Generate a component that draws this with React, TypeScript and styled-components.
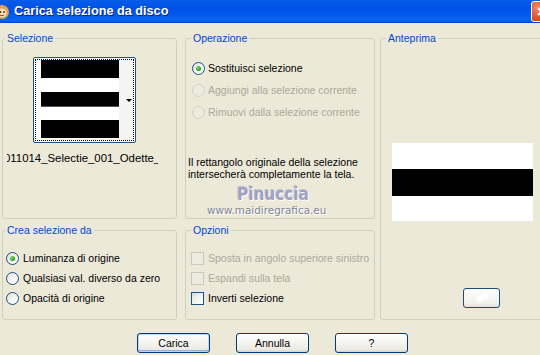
import React from "react";
import styled, { createGlobalStyle, css } from "styled-components";

const GlobalStyle = createGlobalStyle`
  html, body { margin: 0; padding: 0; overflow: hidden; background: #ECE9D8; }
  body { font-family: "Liberation Sans", Arial, sans-serif; font-size: 10.5px; color: #000; }
  * { box-sizing: border-box; }
`;

const Window = styled.div`
  width: 540px;
  height: 355px;
  display: flex;
  flex-direction: column;
  overflow: hidden;
  background: #ECE9D8;
`;

const TitleBar = styled.div`
  height: 23px;
  flex: none;
  display: flex;
  align-items: center;
  overflow: hidden;
  background: linear-gradient(
    to bottom,
    #0A5FE6 0%,
    #0658E8 10%,
    #0052E8 45%,
    #0260F5 80%,
    #0566FA 90%,
    #004BDC 96%,
    #0040D0 100%
  );
`;

const TitleIcon = styled.svg`
  flex: none;
  margin-left: -6px;
  margin-right: 4px;
`;

const TitleText = styled.span`
  flex: 1;
  color: #fff;
  font-family: "Liberation Sans", Arial, sans-serif;
  font-weight: bold;
  font-size: 12.7px;
  text-shadow: 1px 1px 0 #0A1F8A;
  margin-top: -1px;
`;

const CloseBtn = styled.div`
  flex: none;
  width: 21px;
  height: 21px;
  margin-right: -12px;
  border: 1px solid #fff;
  border-radius: 3px;
  background: radial-gradient(circle at 30% 30%, #F08A6A 0%, #E0502E 55%, #C23B1C 100%);
  display: flex;
  align-items: center;
  justify-content: center;
`;

const Body = styled.div`
  padding: 8px 0 0 2px;
  display: grid;
  grid-template-columns: 175px 8px 190px 5px 200px;
  grid-template-rows: 188px 97px;
  grid-template-areas:
    "sel . op . prev"
    "crea . opz . prev";
  row-gap: 4px;
`;

const Group = styled.fieldset<{ $area: string }>`
  grid-area: ${(p) => p.$area};
  margin: 0;
  padding: 0;
  min-width: 0;
  border: 1px solid #D0D0BF;
  border-radius: 3px;
  display: flex;
  flex-direction: column;
`;

const Legend = styled.legend<{ $indent: number }>`
  margin-left: ${(p) => p.$indent}px;
  padding: 0 2px;
  line-height: 14px;
  color: #0046D5;
  font-size: 10.5px;
`;

/* Selezione */
const SelContent = styled.div`
  padding: 12px 0 0 30px;
  display: flex;
  flex-direction: column;
`;

const Thumb = styled.div`
  width: 103px;
  height: 86px;
  border: 1px solid #1C5180;
  border-radius: 2px;
  background: #fff;
  padding: 1px;
`;

const FocusRect = styled.div`
  height: 100%;
  border: 1px dotted #000;
  display: flex;
  padding-left: 5px;
`;

const ArrowArea = styled.div`
  flex: 1;
  display: flex;
  align-items: center;
  justify-content: flex-end;
  padding-right: 1px;
  padding-top: 1px;
  background: #F4F4F4;
`;

const Arrow = styled.div`
  width: 0;
  height: 0;
  border-left: 3px solid transparent;
  border-right: 3px solid transparent;
  border-top: 3px solid #000;
`;

const FileName = styled.div`
  width: 151px;
  margin: 9px 0 0 -26px;
  line-height: 13px;
  font-size: 11.4px;
  white-space: nowrap;
  overflow: hidden;
`;

const FileText = styled.span`
  display: inline-block;
  margin-left: -3px;
`;

/* Options rows */
const RowList = styled.div<{ $top: number; $left: number }>`
  padding: ${(p) => p.$top}px 0 0 ${(p) => p.$left}px;
  display: flex;
  flex-direction: column;
`;

const Row = styled.div<{ $h: number; $disabled?: boolean; $gap?: number }>`
  height: ${(p) => p.$h}px;
  display: flex;
  align-items: center;
  gap: ${(p) => p.$gap ?? 3}px;
  color: ${(p) => (p.$disabled ? "#ACA899" : "#000")};
  white-space: nowrap;
`;

const Radio = styled.span<{ $checked?: boolean; $disabled?: boolean }>`
  flex: none;
  width: 13px;
  height: 13px;
  border-radius: 50%;
  display: flex;
  align-items: center;
  justify-content: center;
  ${(p) =>
    p.$disabled
      ? css`
          border: 1px solid #D2D0C2;
          background: #EDEBE0;
        `
      : css`
          border: 1px solid #1C5180;
          background: linear-gradient(135deg, #DCDBD2 0%, #F4F4F0 45%, #FFFFFF 100%);
        `}
  &::after {
    content: "";
    display: ${(p) => (p.$checked ? "block" : "none")};
    width: 5px;
    height: 5px;
    border-radius: 50%;
    background: radial-gradient(circle at 35% 35%, #7BE07B 0%, #2BA52B 60%, #168A16 100%);
  }
`;

const Check = styled.span<{ $disabled?: boolean }>`
  flex: none;
  width: 13px;
  height: 13px;
  ${(p) =>
    p.$disabled
      ? css`
          border: 1px solid #CAC8BB;
          background: #EDEBE0;
        `
      : css`
          border: 1px solid #1C5180;
          background: linear-gradient(135deg, #DCDBD2 0%, #F2F2EC 50%, #FFFFFF 100%);
        `}
`;

const Note = styled.div`
  margin: 33px 0 0 2px;
  line-height: 12px;
`;

const Watermark = styled.div<{ $left: number; $big?: boolean }>`
  margin-left: ${(p) => p.$left}px;
  white-space: nowrap;
  ${(p) =>
    p.$big
      ? css`
          margin-top: 5px;
          font-family: "DejaVu Sans Condensed", "DejaVu Sans", sans-serif;
          font-weight: bold;
          font-size: 17px;
          line-height: 18px;
          color: #A2A2C0;
          text-shadow: 1px 1px 0 #FFFFFF, -1px -1px 0 #C4C4D4;
        `
      : css`
          margin-top: 1px;
          font-family: "DejaVu Sans", sans-serif;
          font-size: 10.4px;
          line-height: 12px;
          color: #85859A;
          text-shadow: 1px 1px 0 #FFFFFF;
        `}
`;

/* Anteprima */
const PrevContent = styled.div`
  padding: 98px 0 0 11px;
  display: flex;
  flex-direction: column;
`;

const SmallBtn = styled.div`
  width: 37px;
  height: 20px;
  margin: 67px 0 0 71px;
  border: 1px solid #1C4E7E;
  border-radius: 3px;
  background:
    radial-gradient(circle at 45% 55%, #FFFFFF 0 3px, transparent 4px),
    radial-gradient(circle at 60% 40%, #FFFFFF 0 3px, transparent 4px),
    linear-gradient(to bottom, #FDFDFB 0%, #F1F0EA 80%, #E3E1D6 100%);
`;

/* Buttons */
const ButtonBar = styled.div`
  margin-top: 13px;
  padding-left: 137px;
  display: flex;
  gap: 26px;
`;

const Button = styled.button<{ $default?: boolean }>`
  width: 73px;
  height: 20px;
  margin: 0;
  padding: 0;
  border: 1px solid #003C74;
  border-radius: 3px;
  font-family: "Liberation Sans", Arial, sans-serif;
  font-size: 10.5px;
  color: #000;
  background: linear-gradient(to bottom, #FFFFFF 0%, #F6F6F2 40%, #ECEBE4 85%, #D8D5C8 100%);
  ${(p) =>
    p.$default &&
    css`
      box-shadow: inset 0 0 0 1px #C3D4F4, inset 0 -1px 0 1px #97AEE2;
    `}
`;

export default function App() {
  return (
    <>
      <GlobalStyle />
      <Window>
        <TitleBar>
          <TitleIcon width="16" height="16" viewBox="0 0 16 16">
            <circle cx="8" cy="8" r="7" fill="#E8A050" />
            <circle cx="8" cy="9" r="4.5" fill="#F6E2C0" />
            <circle cx="6.5" cy="8" r="1" fill="#5A3010" />
            <circle cx="10" cy="8" r="1" fill="#5A3010" />
            <path d="M6 11 Q8 12.5 10 11" stroke="#A0401A" strokeWidth="1" fill="none" />
          </TitleIcon>
          <TitleText>Carica selezione da disco</TitleText>
          <CloseBtn>
            <svg width="11" height="11" viewBox="0 0 11 11">
              <path d="M2 2 L9 9 M9 2 L2 9" stroke="#fff" strokeWidth="2" />
            </svg>
          </CloseBtn>
        </TitleBar>
        <Body>
          <Group $area="sel">
            <Legend $indent={2}>Selezione</Legend>
            <SelContent>
              <Thumb>
                <FocusRect>
                  <svg width="78" height="80" viewBox="0 0 78 80">
                    <rect width="78" height="80" fill="#fff" />
                    <rect y="0" width="78" height="18" fill="#000" />
                    <rect y="32" width="78" height="15" fill="#000" />
                    <rect y="46" width="78" height="1" fill="#555" />
                    <rect y="60" width="78" height="18" fill="#000" />
                  </svg>
                  <ArrowArea>
                    <Arrow />
                  </ArrowArea>
                </FocusRect>
              </Thumb>
              <FileName>
                <FileText>011014_Selectie_001_Odette_tela</FileText>
              </FileName>
            </SelContent>
          </Group>

          <Group $area="op">
            <Legend $indent={5}>Operazione</Legend>
            <RowList $top={12} $left={6}>
              <Row $h={22}>
                <Radio $checked />
                Sostituisci selezione
              </Row>
              <Row $h={22} $disabled>
                <Radio $disabled />
                Aggiungi alla selezione corrente
              </Row>
              <Row $h={22} $disabled>
                <Radio $disabled />
                Rimuovi dalla selezione corrente
              </Row>
            </RowList>
            <Note>
              Il rettangolo originale della selezione
              <br />
              intersecherà completamente la tela.
            </Note>
            <Watermark $left={51} $big>
              Pinuccia
            </Watermark>
            <Watermark $left={21}>www.maidiregrafica.eu</Watermark>
          </Group>

          <Group $area="prev">
            <Legend $indent={5}>Anteprima</Legend>
            <PrevContent>
              <svg width="141" height="78" viewBox="0 0 141 78">
                <rect width="141" height="78" fill="#fff" />
                <rect y="26" width="141" height="27" fill="#000" />
              </svg>
              <SmallBtn />
            </PrevContent>
          </Group>

          <Group $area="crea">
            <Legend $indent={2}>Crea selezione da</Legend>
            <RowList $top={11} $left={3}>
              <Row $h={20} $gap={4}>
                <Radio $checked />
                Luminanza di origine
              </Row>
              <Row $h={20} $gap={4}>
                <Radio />
                Qualsiasi val. diverso da zero
              </Row>
              <Row $h={20} $gap={4}>
                <Radio />
                Opacità di origine
              </Row>
            </RowList>
          </Group>

          <Group $area="opz">
            <Legend $indent={5}>Opzioni</Legend>
            <RowList $top={11} $left={5}>
              <Row $h={20} $gap={4} $disabled>
                <Check $disabled />
                Sposta in angolo superiore sinistro
              </Row>
              <Row $h={20} $gap={4} $disabled>
                <Check $disabled />
                Espandi sulla tela
              </Row>
              <Row $h={20} $gap={4}>
                <Check />
                Inverti selezione
              </Row>
            </RowList>
          </Group>
        </Body>
        <ButtonBar>
          <Button $default>Carica</Button>
          <Button>Annulla</Button>
          <Button>?</Button>
        </ButtonBar>
      </Window>
    </>
  );
}
